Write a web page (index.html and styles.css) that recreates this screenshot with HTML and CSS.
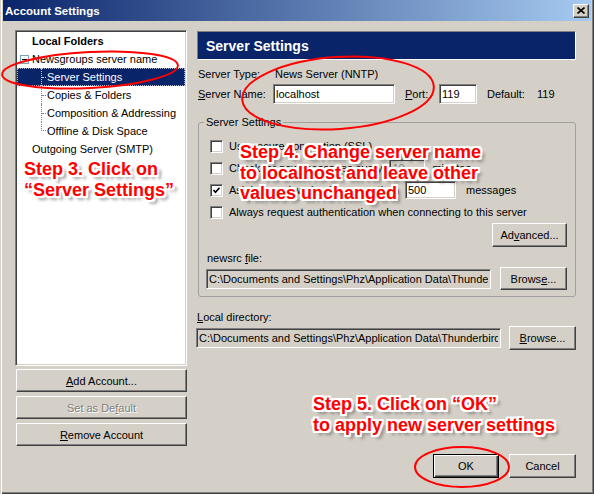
FILE: index.html
```html
<!DOCTYPE html>
<html>
<head>
<meta charset="utf-8">
<link rel="stylesheet" href="styles.css">
</head>
<body>
<div class="window">
  <div class="titlebar">
    <span class="title">Account Settings</span>
    <span class="close"><svg width="8" height="7" viewBox="0 0 8 7"><path d="M0.5 0.5 L7.5 6.5 M7.5 0.5 L0.5 6.5" stroke="#000" stroke-width="1.6" fill="none"/></svg></span>
  </div>
  <div class="main">
    <div class="left">
      <div class="tree">
        <div class="node root bold">Local Folders</div>
        <div class="node root expandable"><span class="expander"><span class="minus"></span></span><span>Newsgroups server name</span></div>
        <div class="child selected"><span class="branch"></span><span class="lab">Server Settings</span></div>
        <div class="child"><span class="branch"></span><span class="lab">Copies &amp; Folders</span></div>
        <div class="child"><span class="branch"></span><span class="lab">Composition &amp; Addressing</span></div>
        <div class="child last"><span class="branch"></span><span class="lab">Offline &amp; Disk Space</span></div>
        <div class="node root">Outgoing Server (SMTP)</div>
      </div>
      <div class="acct-buttons">
        <div class="btn wide"><span><u>A</u>dd Account...</span></div>
        <div class="btn wide disabled"><span>Set as De<u>f</u>ault</span></div>
        <div class="btn wide"><span><u>R</u>emove Account</span></div>
      </div>
    </div>
    <div class="right">
      <div class="header">Server Settings</div>
      <div class="row-type"><span class="lbl">Server Type:</span><span>News Server (NNTP)</span></div>
      <div class="row-name">
        <span class="lbl name-lbl"><u>S</u>erver Name:</span>
        <span class="field host">localhost</span>
        <span class="port-lbl"><u>P</u>ort:</span>
        <span class="field port">119</span>
        <span class="def-lbl">Default:</span>
        <span>119</span>
      </div>
      <fieldset class="group">
        <legend>Server Settings</legend>
        <div class="cb-row first"><span class="cb"></span><span>Use secure connection (SSL)</span></div>
        <div class="cb-row"><span class="cb"></span><span>Check for new messages every</span><span class="field small disabled-field ten">10</span><span class="after">minutes</span></div>
        <div class="cb-row"><span class="cb"><svg width="9" height="9" viewBox="0 0 9 9"><path d="M1.5 4 L3.5 6.2 L7.5 1.8" stroke="#000" stroke-width="1.7" fill="none"/></svg></span><span>Ask before downloading more than</span><span class="field small five">500</span><span class="after2">messages</span></div>
        <div class="cb-row"><span class="cb"></span><span>Always request authentication when connecting to this server</span></div>
        <div class="adv-row"><div class="btn adv"><span>Ad<u>v</u>anced...</span></div></div>
        <div class="label-row"><span>newsrc <u>f</u>ile:</span></div>
        <div class="path-row">
          <span class="field path newsrc"><span class="clip">C:\Documents and Settings\Phz\Application Data\Thunder</span></span>
          <div class="btn browse"><span>Brows<u>e</u>...</span></div>
        </div>
      </fieldset>
      <div class="label-row local-lbl"><span><u>L</u>ocal directory:</span></div>
      <div class="path-row local">
        <span class="field path localdir"><span class="clip">C:\Documents and Settings\Phz\Application Data\Thunderbird</span></span>
        <div class="btn browse big"><span><u>B</u>rowse...</span></div>
      </div>
    </div>
  </div>
  <div class="footer">
    <div class="btn default ok"><span>OK</span></div>
    <div class="btn cancel"><span>Cancel</span></div>
  </div>

  <svg class="marks" width="594" height="494" viewBox="0 0 594 494">
    <ellipse cx="90" cy="70" rx="88" ry="18" transform="rotate(-3 90 70)" fill="none" stroke="#f00" stroke-width="2"/>
    <ellipse cx="338" cy="93" rx="96" ry="36" transform="rotate(-4 338 93)" fill="none" stroke="#f00" stroke-width="2"/>
    <ellipse cx="462" cy="467" rx="47" ry="20" fill="none" stroke="#f00" stroke-width="2"/>
  </svg>
  <div class="note note3">Step 3. Click on<br>“Server Settings”</div>
  <div class="note note4">Step 4. Change server name<br>to localhost and leave other<br>values unchanged</div>
  <div class="note note5">Step 5. Click on “OK”<br>to apply new server settings</div>
</div>
</body>
</html>
```
FILE: styles.css
```css
html, body {
  margin: 0;
  padding: 0;
}
body {
  font: 11px "Liberation Sans", Arial, sans-serif;
  color: #000;
}
u {
  text-decoration: underline;
  text-underline-offset: 1px;
}
.window {
  position: relative;
  width: 594px;
  height: 494px;
  box-sizing: border-box;
  background: #d4d0c8;
  padding: 0 3px 3px 3px;
  display: flex;
  flex-direction: column;
  overflow: hidden;
  box-shadow: inset 1px 0 #d4d0c8, inset 2px 0 #fff, inset -1px -1px #404040, inset -2px -2px #808080;
}
.titlebar {
  height: 21px;
  flex: none;
  display: flex;
  align-items: center;
  padding-left: 2px;
  background: linear-gradient(to right, #0a246a, #a6caf0);
}
.title {
  color: #fff;
  font-weight: bold;
  font-size: 11.5px;
}
.close {
  margin-left: auto;
  margin-right: 2px;
  width: 16px;
  height: 14px;
  box-sizing: border-box;
  background: #d4d0c8;
  border: 1px solid;
  border-color: #fff #404040 #404040 #fff;
  box-shadow: inset -1px -1px #808080;
  display: flex;
  align-items: center;
  justify-content: center;
}
.main {
  display: flex;
  gap: 10px;
  padding: 9px 15px 0 12px;
}
.left {
  width: 172px;
  flex: none;
}
.tree {
  height: 336px;
  box-sizing: border-box;
  background: #fff;
  border: 1px solid;
  border-color: #808080 #fff #fff #808080;
  box-shadow: inset 1px 1px #404040, inset -1px -1px #d4d0c8;
  padding: 1px;
}
.node {
  height: 18px;
  display: flex;
  align-items: center;
  white-space: nowrap;
}
.root {
  padding-left: 15px;
}
.bold {
  font-weight: bold;
}
.root.expandable {
  padding-left: 3px;
}
.expander {
  width: 9px;
  height: 9px;
  box-sizing: border-box;
  border: 1px solid #7b9ebd;
  background: linear-gradient(#fff, #dcdcd4);
  margin-right: 3px;
  display: flex;
  align-items: center;
  justify-content: center;
}
.minus {
  width: 5px;
  height: 1px;
  background: #000;
}
.child {
  height: 18px;
  display: flex;
  white-space: nowrap;
}
.branch {
  flex: none;
  width: 4px;
  margin-left: 24px;
  border-left: 1px dotted #808080;
}
.branch::after {
  content: "";
  display: block;
  height: 9px;
  border-bottom: 1px dotted #808080;
}
.child.last .branch {
  border-left: none;
  width: 5px;
}
.child.last .branch::after {
  border-left: 1px dotted #808080;
  height: 8px;
}
.lab {
  display: flex;
  align-items: center;
  margin-left: 1px;
}
.child.selected {
  background: #0a246a;
  color: #fff;
  outline: 1px dotted #b0b8d0;
  outline-offset: -1px;
}
.child.selected .branch,
.child.selected .branch::after {
  border-color: #c8cce0;
}
.acct-buttons {
  margin-top: 3px;
  padding-left: 1px;
  display: flex;
  flex-direction: column;
  gap: 4px;
}
.btn {
  box-sizing: border-box;
  background: #d4d0c8;
  border: 1px solid;
  border-color: #fff #404040 #404040 #fff;
  box-shadow: inset -1px -1px #808080;
  display: flex;
  align-items: center;
  justify-content: center;
  white-space: nowrap;
  flex: none;
}
.btn.wide {
  width: 171px;
  height: 23px;
}
.btn.disabled {
  color: #808080;
  text-shadow: 1px 1px 0 #fff;
}
.right {
  width: 379px;
  flex: none;
  display: flex;
  flex-direction: column;
}
.header {
  margin-top: 1px;
  height: 29px;
  box-sizing: border-box;
  background: #0a246a;
  border: 1px solid;
  border-color: #808080 #fff #fff #808080;
  color: #fff;
  font-weight: bold;
  font-size: 14px;
  padding-left: 8px;
  display: flex;
  align-items: center;
}
.row-type {
  margin-top: 7px;
  height: 14px;
  display: flex;
  align-items: center;
  white-space: nowrap;
}
.lbl {
  width: 78px;
  padding-left: 1px;
  box-sizing: border-box;
  flex: none;
}
.row-name {
  margin-top: 3px;
  height: 20px;
  display: flex;
  align-items: center;
  white-space: nowrap;
}
.lbl.name-lbl {
  width: 76px;
}
.field {
  box-sizing: border-box;
  height: 20px;
  border: 1px solid;
  border-color: #808080 #fff #fff #808080;
  box-shadow: inset 1px 1px #404040, inset -1px -1px #d4d0c8;
  background: #fff;
  padding: 0 2px;
  display: flex;
  align-items: center;
  white-space: nowrap;
  overflow: hidden;
  flex: none;
}
.clip {
  overflow: hidden;
  white-space: nowrap;
}
.field.host {
  width: 122px;
}
.port-lbl {
  margin-left: 10px;
  width: 34px;
  flex: none;
}
.field.port {
  width: 38px;
}
.def-lbl {
  margin-left: 10px;
  width: 50px;
  flex: none;
}
.group {
  margin: 11px 0 0 1px;
  padding: 0 8px 6px 8px;
  border: 1px solid #a0a0a0;
  border-radius: 3px;
  min-width: 0;
}
.group legend {
  margin-left: -3px;
  padding: 0 2px;
  line-height: 14px;
}
.cb-row {
  height: 22px;
  display: flex;
  align-items: center;
  padding-left: 3px;
  white-space: nowrap;
}
.cb-row.first {
  margin-top: 6px;
}
.cb {
  width: 13px;
  height: 13px;
  box-sizing: border-box;
  border: 1px solid;
  border-color: #808080 #fff #fff #808080;
  box-shadow: inset 1px 1px #404040, inset -1px -1px #d4d0c8;
  background: #fff;
  margin-right: 6px;
  flex: none;
  display: flex;
  align-items: center;
  justify-content: center;
}
.field.small {
  height: 18px;
}
.field.ten {
  width: 36px;
  margin-left: 7px;
}
.field.disabled-field {
  background: #d4d0c8;
  color: #808080;
}
.after {
  margin-left: 7px;
}
.field.five {
  width: 51px;
  margin-left: 6px;
}
.after2 {
  margin-left: 10px;
}
.adv-row {
  display: flex;
  justify-content: flex-end;
}
.btn.adv {
  width: 75px;
  height: 24px;
}
.label-row {
  margin-top: 4px;
  height: 14px;
  display: flex;
  align-items: center;
  white-space: nowrap;
}
.path-row {
  margin-top: 2px;
  height: 23px;
  display: flex;
  align-items: center;
  justify-content: space-between;
}
.field.path {
  background: #d4d0c8;
  margin-left: -1px;
}
.field.newsrc {
  width: 285px;
}
.btn.browse {
  width: 67px;
  height: 23px;
}
.local-lbl {
  margin-top: 13px;
}
.path-row.local {
  height: 24px;
}
.field.localdir {
  width: 305px;
}
.btn.browse.big {
  height: 24px;
}
.footer {
  margin-top: auto;
  display: flex;
  justify-content: flex-end;
  gap: 10px;
  padding: 0 15px 13px 0;
}
.btn.ok {
  width: 66px;
  height: 24px;
}
.btn.default {
  border: 1px solid #000;
  box-shadow: inset 1px 1px #fff, inset -1px -1px #404040, inset -2px -2px #808080;
}
.btn.cancel {
  width: 67px;
  height: 24px;
}
.marks {
  position: absolute;
  left: 0;
  top: 0;
  pointer-events: none;
}
.note {
  position: absolute;
  font: bold 18px/20.5px "Liberation Sans", Arial, sans-serif;
  color: #f00;
  white-space: nowrap;
  text-shadow:
    -2px -2px 0 #fff, 0 -2px 0 #fff, 2px -2px 0 #fff,
    -2px 0 0 #fff, 2px 0 0 #fff,
    -2px 2px 0 #fff, 0 2px 0 #fff, 2px 2px 0 #fff,
    -1px -1px 0 #fff, 1px 1px 0 #fff,
    4px 4px 3px rgba(70, 70, 70, 0.55);
}
.note3 {
  left: 24px;
  top: 159px;
}
.note4 {
  left: 240px;
  top: 142px;
}
.note5 {
  left: 313px;
  top: 394px;
}
```
